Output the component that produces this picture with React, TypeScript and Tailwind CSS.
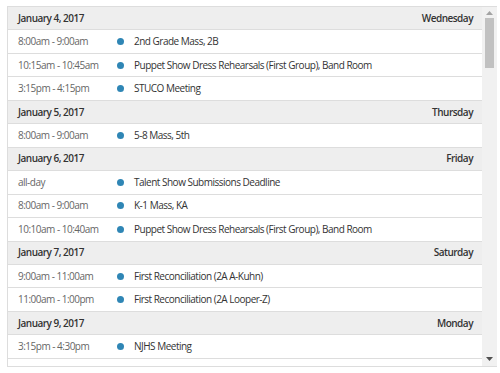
import React from "react";

type Ev = { time: string; title: string };
type Day = { date: string; weekday: string; events: Ev[] };

const days: Day[] = [
  {
    date: "January 4, 2017",
    weekday: "Wednesday",
    events: [
      { time: "8:00am - 9:00am", title: "2nd Grade Mass, 2B" },
      { time: "10:15am - 10:45am", title: "Puppet Show Dress Rehearsals (First Group), Band Room" },
      { time: "3:15pm - 4:15pm", title: "STUCO Meeting" },
    ],
  },
  {
    date: "January 5, 2017",
    weekday: "Thursday",
    events: [{ time: "8:00am - 9:00am", title: "5-8 Mass, 5th" }],
  },
  {
    date: "January 6, 2017",
    weekday: "Friday",
    events: [
      { time: "all-day", title: "Talent Show Submissions Deadline" },
      { time: "8:00am - 9:00am", title: "K-1 Mass, KA" },
      { time: "10:10am - 10:40am", title: "Puppet Show Dress Rehearsals (First Group), Band Room" },
    ],
  },
  {
    date: "January 7, 2017",
    weekday: "Saturday",
    events: [
      { time: "9:00am - 11:00am", title: "First Reconciliation (2A A-Kuhn)" },
      { time: "11:00am - 1:00pm", title: "First Reconciliation (2A Looper-Z)" },
    ],
  },
  {
    date: "January 9, 2017",
    weekday: "Monday",
    events: [
      { time: "3:15pm - 4:30pm", title: "NJHS Meeting" },
      { time: "", title: "" },
    ],
  },
];

export default function App() {
  return (
    <div
      className="w-[500px] h-[373px] bg-white pt-[6px] pl-[7px]"
      style={{ fontFamily: '"Open Sans", "Noto Sans", sans-serif' }}
    >
      <div className="flex w-[490px] h-[361px] border border-[#dddddd] border-r-0">
        <div className="flex-1 overflow-hidden">
          {days.map((d) => (
            <div key={d.date}>
              <div className="flex items-center justify-between h-[23.46px] bg-[#eeeeee] border-b border-[#dddddd] pl-[10px] pr-[9px] text-[10px] tracking-[-0.5px] font-semibold text-[#333333]">
                <span>{d.date}</span>
                <span>{d.weekday}</span>
              </div>
              {d.events.map((e, i) => (
                <div
                  key={i}
                  className="flex items-center h-[23.46px] border-b border-[#dddddd] pl-[10px] text-[10px] tracking-[-0.5px] bg-white"
                >
                  <span className="w-[99px] shrink-0 text-[#666666] whitespace-nowrap">{e.time}</span>
                  {e.title && <span className="w-[7px] h-[7px] rounded-full bg-[#2f86b5] shrink-0" />}
                  <span className="ml-[10px] text-[#333333] whitespace-nowrap">{e.title}</span>
                </div>
              ))}
            </div>
          ))}
        </div>
        <div className="w-[15px] shrink-0 bg-[#f1f1f1] flex flex-col items-center">
          <div className="h-[11px] w-full flex items-center justify-center">
            <svg width="7" height="4" viewBox="0 0 7 4">
              <path d="M0 4 L3.5 0 L7 4 Z" fill="#a3a3a3" />
            </svg>
          </div>
          <div className="w-[9px] h-[50px] bg-[#c1c1c1]" />
          <div className="flex-1" />
          <div className="h-[14px] w-full flex items-center justify-center">
            <svg width="7" height="4" viewBox="0 0 7 4">
              <path d="M0 0 L7 0 L3.5 4 Z" fill="#505050" />
            </svg>
          </div>
        </div>
      </div>
    </div>
  );
}
